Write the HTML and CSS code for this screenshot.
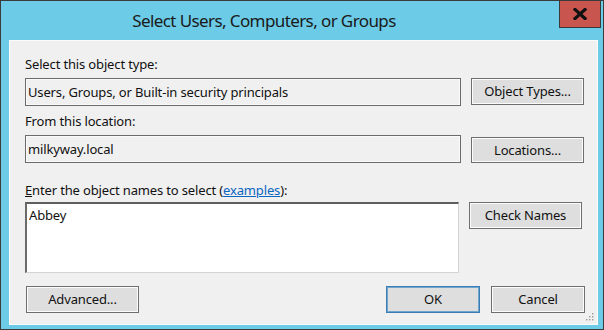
FILE: index.html
```html
<!DOCTYPE html>
<html>
<head>
<meta charset="utf-8">
<link rel="stylesheet" href="styles.css">
</head>
<body>
<div class="window">
  <div class="titlebar">
    <div class="title">Select Users, Computers, or Groups</div>
    <div class="close">
      <svg width="14" height="12" viewBox="0 0 14 12"><path d="M2 1.5 L12 10.5 M12 1.5 L2 10.5" stroke="#111" stroke-width="3.2" stroke-linecap="square"/></svg>
    </div>
  </div>
  <div class="panel">
    <div class="label">Select this object type:</div>
    <div class="row">
      <div class="field">Users, Groups, or Built-in security principals</div>
      <div class="btn btn-first">Object Types...</div>
    </div>
    <div class="label label-2">From this location:</div>
    <div class="row">
      <div class="field">milkyway.local</div>
      <div class="btn btn-second">Locations...</div>
    </div>
    <div class="label label-3"><span class="u">E</span>nter the object names to select (<span class="link">examples</span>):</div>
    <div class="row">
      <div class="names">Abbey</div>
      <div class="btn">Check Names</div>
    </div>
    <div class="footer">
      <div class="btn">Advanced...</div>
      <div class="spacer"></div>
      <div class="btn btn-small btn-default">OK</div>
      <div class="btn btn-small">Cancel</div>
    </div>
    <svg class="grip" width="8" height="8" viewBox="0 0 8 8">
      <rect x="6" y="0" width="1.4" height="1.4" fill="#9a9a9a"/>
      <rect x="3" y="3" width="1.4" height="1.4" fill="#9a9a9a"/>
      <rect x="6" y="3" width="1.4" height="1.4" fill="#9a9a9a"/>
      <rect x="0" y="6" width="1.4" height="1.4" fill="#9a9a9a"/>
      <rect x="3" y="6" width="1.4" height="1.4" fill="#9a9a9a"/>
      <rect x="6" y="6" width="1.4" height="1.4" fill="#9a9a9a"/>
    </svg>
  </div>
</div>
</body>
</html>
```
FILE: styles.css
```css
* { box-sizing: border-box; }
html, body { margin: 0; padding: 0; background: #ffffff; }
body { font-family: "Noto Sans", "Open Sans", sans-serif; font-size: 13px; letter-spacing: -0.15px; color: #111111; }

.window {
  width: 604px;
  height: 330px;
  border: 1px solid #3b3b3b;
  background: #6ccbe7;
  display: flex;
  flex-direction: column;
  padding: 0 5px 4px 8px;
}

.titlebar {
  height: 39px;
  display: flex;
  align-items: flex-start;
  margin-right: -3px;
}
.title {
  flex: 1;
  text-align: center;
  font-size: 17px;
  line-height: 22px;
  padding-top: 9px;
  padding-right: 40px;
  color: #1a1a1a;
  letter-spacing: -0.6px;
}
.close {
  width: 42px;
  height: 28px;
  margin-top: -1px;
  background: #c8564f;
  border: 1px solid #3a3a3a;
  display: flex;
  align-items: center;
  justify-content: center;
}

.panel {
  position: relative;
  flex: 1;
  background: #f0f0f0;
  border: 1px solid #fbfbfb;
  padding: 14px 12px 0 15px;
}

.label { height: 18px; line-height: 18px; margin-bottom: 5px; white-space: nowrap; }
.label-2 { margin-top: 6px; }
.label-3 { margin-top: 18px; margin-bottom: 3px; }
.u { text-decoration: underline; }
.link { color: #0b66c2; text-decoration: underline; }

.row { display: flex; gap: 10px; align-items: flex-start; }

.field {
  width: 436px;
  height: 28px;
  line-height: 26px;
  padding-left: 2px;
  border: 1px solid #6b6b6b;
  box-shadow: inset 0 0 0 1px #fafafa;
  background: #f0f0f0;
  white-space: nowrap;
}

.names {
  width: 434px;
  height: 71px;
  background: #ffffff;
  border-top: 2px solid #5e5e5e;
  border-left: 2px solid #6a6a6a;
  border-right: 1px solid #d4d4d4;
  border-bottom: 1px solid #d4d4d4;
  padding: 2px 0 0 2px;
  line-height: 18px;
}

.btn {
  width: 113px;
  height: 27px;
  border: 1px solid #6e6e6e;
  box-shadow: inset 0 0 0 1px #fcfcfc;
  background: #dedede;
  text-align: center;
  line-height: 25px;
  white-space: nowrap;
}
.btn-first { margin-top: 0; height: 27px; }
.btn-second { margin-top: 2px; height: 26px; line-height: 24px; }
.btn-small { width: 94px; }
.btn-default {
  border-color: #3b7db3;
  box-shadow: inset 0 0 0 1px #6fa6cf;
}

.footer {
  display: flex;
  gap: 11px;
  margin-top: 13px;
  padding-left: 1px;
}
.spacer { flex: 1; }

.grip { position: absolute; right: 3px; bottom: 3px; }
```
